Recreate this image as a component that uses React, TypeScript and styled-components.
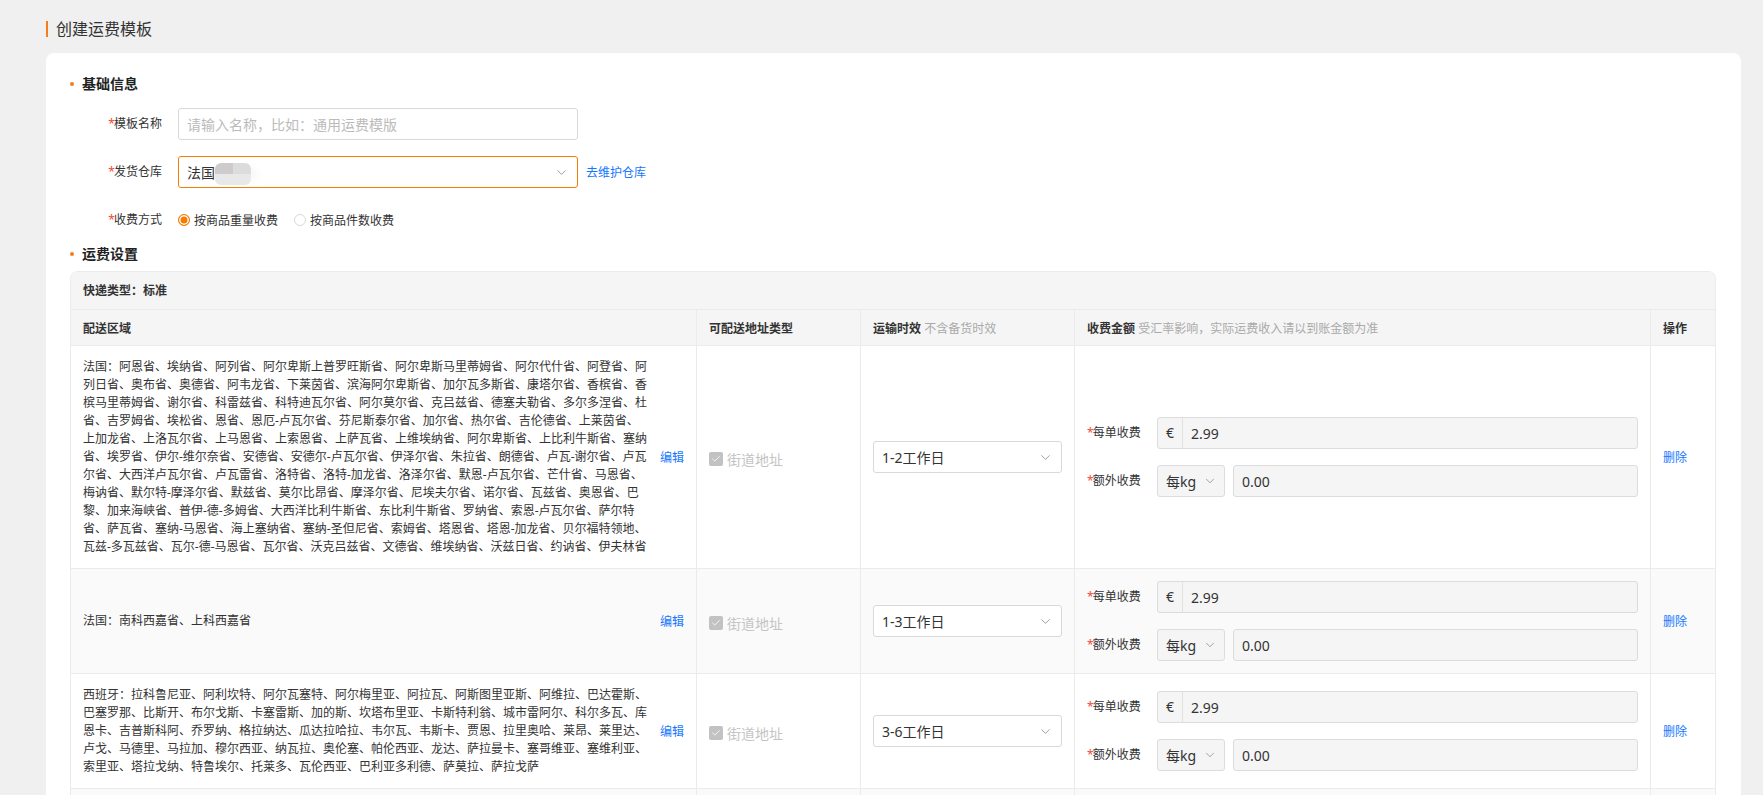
import React from 'react';
import styled, { createGlobalStyle } from 'styled-components';
import { ChevronDown, Check } from 'lucide-react';

const FONT = `"Noto Sans", "Noto Sans CJK SC", sans-serif`;

const franceLines = [
  '法国：阿恩省、埃纳省、阿列省、阿尔卑斯上普罗旺斯省、阿尔卑斯马里蒂姆省、阿尔代什省、阿登省、阿',
  '列日省、奥布省、奥德省、阿韦龙省、下莱茵省、滨海阿尔卑斯省、加尔瓦多斯省、康塔尔省、香槟省、香',
  '槟马里蒂姆省、谢尔省、科雷兹省、科特迪瓦尔省、阿尔莫尔省、克吕兹省、德塞夫勒省、多尔多涅省、杜',
  '省、吉罗姆省、埃松省、恩省、恩厄-卢瓦尔省、芬尼斯泰尔省、加尔省、热尔省、吉伦德省、上莱茵省、',
  '上加龙省、上洛瓦尔省、上马恩省、上索恩省、上萨瓦省、上维埃纳省、阿尔卑斯省、上比利牛斯省、塞纳',
  '省、埃罗省、伊尔-维尔奈省、安德省、安德尔-卢瓦尔省、伊泽尔省、朱拉省、朗德省、卢瓦-谢尔省、卢瓦',
  '尔省、大西洋卢瓦尔省、卢瓦雷省、洛特省、洛特-加龙省、洛泽尔省、默恩-卢瓦尔省、芒什省、马恩省、',
  '梅讷省、默尔特-摩泽尔省、默兹省、莫尔比昂省、摩泽尔省、尼埃夫尔省、诺尔省、瓦兹省、奥恩省、巴',
  '黎、加来海峡省、普伊-德-多姆省、大西洋比利牛斯省、东比利牛斯省、罗纳省、索恩-卢瓦尔省、萨尔特',
  '省、萨瓦省、塞纳-马恩省、海上塞纳省、塞纳-圣但尼省、索姆省、塔恩省、塔恩-加龙省、贝尔福特领地、',
  '瓦兹-多瓦兹省、瓦尔-德-马恩省、瓦尔省、沃克吕兹省、文德省、维埃纳省、沃兹日省、约讷省、伊夫林省',
];

const spainLines = [
  '西班牙：拉科鲁尼亚、阿利坎特、阿尔瓦塞特、阿尔梅里亚、阿拉瓦、阿斯图里亚斯、阿维拉、巴达霍斯、',
  '巴塞罗那、比斯开、布尔戈斯、卡塞雷斯、加的斯、坎塔布里亚、卡斯特利翁、城市雷阿尔、科尔多瓦、库',
  '恩卡、吉普斯科阿、乔罗纳、格拉纳达、瓜达拉哈拉、韦尔瓦、韦斯卡、贾恩、拉里奥哈、莱昂、莱里达、',
  '卢戈、马德里、马拉加、穆尔西亚、纳瓦拉、奥伦塞、帕伦西亚、龙达、萨拉曼卡、塞哥维亚、塞维利亚、',
  '索里亚、塔拉戈纳、特鲁埃尔、托莱多、瓦伦西亚、巴利亚多利德、萨莫拉、萨拉戈萨',
];

const rows = [
  { lines: franceLines, time: '1-2工作日' },
  { lines: ['法国：南科西嘉省、上科西嘉省'], time: '1-3工作日' },
  { lines: spainLines, time: '3-6工作日' },
];

function App() {
  return (
    <Page>
      <GlobalStyle />
      <PageTitle>创建运费模板</PageTitle>
      <Card>
        <SectionTitle>基础信息</SectionTitle>
        <FormRow>
          <FormLabel>
            <Star>*</Star>模板名称
          </FormLabel>
          <TextInput placeholder="请输入名称，比如：通用运费模版" />
        </FormRow>
        <FormRow>
          <FormLabel>
            <Star>*</Star>发货仓库
          </FormLabel>
          <SelectBox $width={400} $active>
            <span>
              法国
              <BlurPatch />
            </span>
            <Arrow size={15} strokeWidth={1} />
          </SelectBox>
          <LinkText>去维护仓库</LinkText>
        </FormRow>
        <FormRow>
          <FormLabel>
            <Star>*</Star>收费方式
          </FormLabel>
          <RadioGroup>
            <RadioItem>
              <Radio $checked />
              按商品重量收费
            </RadioItem>
            <RadioItem>
              <Radio />
              按商品件数收费
            </RadioItem>
          </RadioGroup>
        </FormRow>
        <SectionTitle $second>运费设置</SectionTitle>
        <TableBox>
          <TableCaption>快递类型：标准</TableCaption>
          <Table>
            <colgroup>
              <col style={{ width: 625 }} />
              <col style={{ width: 164 }} />
              <col style={{ width: 214 }} />
              <col style={{ width: 576 }} />
              <col />
            </colgroup>
            <thead>
              <tr>
                <Th>配送区域</Th>
                <Th>可配送地址类型</Th>
                <Th>
                  运输时效 <Hint>不含备货时效</Hint>
                </Th>
                <Th>
                  收费金额 <Hint>受汇率影响，实际运费收入请以到账金额为准</Hint>
                </Th>
                <Th>操作</Th>
              </tr>
            </thead>
            <tbody>
              {rows.map((row) => (
                <tr key={row.time}>
                  <Td>
                    <AreaCell>
                      <AreaText>
                        {row.lines.map((line) => (
                          <AreaLine key={line}>{line}</AreaLine>
                        ))}
                      </AreaText>
                      <LinkText>编辑</LinkText>
                    </AreaCell>
                  </Td>
                  <Td>
                    <CheckItem>
                      <CheckMark>
                        <Check size={10} strokeWidth={2} color="#fff" />
                      </CheckMark>
                      街道地址
                    </CheckItem>
                  </Td>
                  <Td>
                    <SelectBox $width={189}>
                      <span>{row.time}</span>
                      <Arrow size={15} strokeWidth={1} />
                    </SelectBox>
                  </Td>
                  <Td>
                    <FeeRow>
                      <FeeLabel>
                        <Star>*</Star>每单收费
                      </FeeLabel>
                      <FilledBox>
                        <Currency>€</Currency>
                        <FilledValue>2.99</FilledValue>
                      </FilledBox>
                    </FeeRow>
                    <FeeRow>
                      <FeeLabel>
                        <Star>*</Star>额外收费
                      </FeeLabel>
                      <UnitSelect>
                        每kg
                        <Arrow size={14} strokeWidth={1} />
                      </UnitSelect>
                      <FilledBox>
                        <FilledValue>0.00</FilledValue>
                      </FilledBox>
                    </FeeRow>
                  </Td>
                  <Td>
                    <LinkText>删除</LinkText>
                  </Td>
                </tr>
              ))}
              <tr>
                <EmptyTd />
                <EmptyTd />
                <EmptyTd />
                <EmptyTd />
                <EmptyTd />
              </tr>
            </tbody>
          </Table>
        </TableBox>
      </Card>
    </Page>
  );
}

export default App;

const GlobalStyle = createGlobalStyle`
  html, body {
    margin: 0;
    height: 795px;
    overflow: hidden;
    background: #f0f0f0;
  }
  * {
    box-sizing: border-box;
  }
`;
const Page = styled.div`
  height: 795px;
  overflow: hidden;
  padding: 21px 22px 0 46px;
  font-family: ${FONT};
  font-size: 12px;
  color: #333;
`;
const PageTitle = styled.h1`
  height: 16px;
  margin: 0 0 16px;
  padding-left: 8px;
  border-left: 2px solid #f57c1f;
  font-size: 16px;
  line-height: 16px;
  font-weight: 400;
  color: #333;
`;
const Card = styled.div`
  padding: 21px 25px 0 24px;
  border-radius: 8px;
  background: #fff;
  height: 800px;
`;
const SectionTitle = styled.h2<{ $second?: boolean }>`
  position: relative;
  height: 20px;
  margin: ${(p) => (p.$second ? '8px' : '0')} 0 ${(p) => (p.$second ? '7px' : '14px')};
  padding-left: 12px;
  font-size: 14px;
  line-height: 20px;
  font-weight: 700;
  color: #222;
  &::before {
    content: '';
    position: absolute;
    left: 0;
    top: 8px;
    width: 4px;
    height: 4px;
    border-radius: 50%;
    background: #f57c1f;
  }
`;
const FormRow = styled.div`
  display: flex;
  align-items: center;
  height: 32px;
  margin-bottom: 16px;
  &:nth-of-type(3) {
    margin-bottom: 0;
  }
`;
const FormLabel = styled.label`
  width: 108px;
  padding: 0 16px 1px 0;
  text-align: right;
  line-height: 16px;
  color: #333;
`;
const Star = styled.span`
  margin-right: -1px;
  color: #f5483b;
`;
const TextInput = styled.input`
  width: 400px;
  height: 32px;
  padding: 0 8px;
  border: 1px solid #d9d9d9;
  border-radius: 3px;
  outline: none;
  font-family: ${FONT};
  font-size: 14px;
  &::placeholder {
    color: #bbb;
  }
`;
const SelectBox = styled.div<{ $width: number; $active?: boolean }>`
  display: flex;
  align-items: center;
  justify-content: space-between;
  width: ${(p) => p.$width}px;
  height: 32px;
  padding: 0 8px;
  border: 1px solid ${(p) => (p.$active ? '#f57c00' : '#d9d9d9')};
  border-radius: 3px;
  background: #fff;
  font-size: 14px;
  color: #333;
  span {
    display: flex;
    align-items: center;
  }
`;
const Arrow = styled(ChevronDown)`
  flex: none;
  color: #666;
`;
const BlurPatch = styled.i`
  display: block;
  width: 36px;
  height: 22px;
  margin-top: 3px;
  border-radius: 6px;
  background:
    linear-gradient(#e8e8e8, #e8e8e8) 0 100% / 100% 50% no-repeat,
    linear-gradient(90deg, #cfcacd 0 50%, #dcdcdc 50% 100%) 0 0 / 100% 50% no-repeat;
  box-shadow: 12px 0 10px -6px #f4f5fa;
  filter: blur(0.6px);
`;
const LinkText = styled.a`
  flex: none;
  margin-left: 8px;
  color: #1677ff;
  font-size: 12px;
  td > & {
    margin-left: 0;
  }
`;
const RadioGroup = styled.div`
  display: flex;
  gap: 16px;
`;
const RadioItem = styled.label`
  display: flex;
  align-items: center;
  gap: 4px;
  color: #333;
`;
const Radio = styled.i<{ $checked?: boolean }>`
  display: block;
  width: 12px;
  height: 12px;
  border-radius: 50%;
  border: 1px solid ${(p) => (p.$checked ? '#f57c00' : '#d9d9d9')};
  background: ${(p) => (p.$checked ? '#f57c00' : '#fff')};
  box-shadow: ${(p) => (p.$checked ? 'inset 0 0 0 1.5px #fff' : 'none')};
`;
const TableBox = styled.div`
  width: 1646px;
  border: 1px solid #ebebeb;
  border-bottom: 0;
  border-radius: 8px 8px 0 0;
  overflow: hidden;
`;
const TableCaption = styled.div`
  height: 37px;
  padding-left: 12px;
  background: #f5f5f5;
  font-weight: 700;
  line-height: 37px;
  color: #333;
`;
const Table = styled.table`
  width: 100%;
  table-layout: fixed;
  border-collapse: separate;
  border-spacing: 0;
  tbody tr:nth-child(even) td {
    background: #fafafa;
  }
`;
const Th = styled.th`
  height: 37px;
  padding: 0 12px;
  border-top: 1px solid #ebebeb;
  border-bottom: 1px solid #ebebeb;
  border-left: 1px solid #ebebeb;
  background: #f5f5f5;
  text-align: left;
  font-size: 12px;
  font-weight: 700;
  color: #333;
  &:first-child {
    border-left: 0;
  }
`;
const Hint = styled.span`
  font-weight: 400;
  color: #aaa;
`;
const Td = styled.td`
  padding: 12px;
  border-bottom: 1px solid #ebebeb;
  border-left: 1px solid #ebebeb;
  vertical-align: middle;
  &:first-child {
    border-left: 0;
  }
`;
const EmptyTd = styled(Td)`
  height: 60px;
`;
const AreaCell = styled.div`
  display: flex;
  align-items: center;
  justify-content: space-between;
`;
const AreaText = styled.div`
  line-height: 18px;
  color: #333;
`;
const AreaLine = styled.div`
  white-space: nowrap;
`;
const CheckItem = styled.label`
  display: flex;
  align-items: center;
  gap: 4px;
  padding-top: 4px;
  font-size: 14px;
  color: #c4c4c4;
`;
const CheckMark = styled.i`
  display: flex;
  align-items: center;
  justify-content: center;
  width: 14px;
  height: 14px;
  border-radius: 2px;
  background: #c2c2c2;
`;
const FeeRow = styled.div`
  display: flex;
  align-items: center;
  gap: 8px;
  height: 32px;
  & + & {
    margin-top: 16px;
  }
`;
const FeeLabel = styled.label`
  flex: none;
  width: 62px;
  padding-bottom: 3px;
  color: #333;
`;
const FilledBox = styled.div`
  flex: 1;
  display: flex;
  align-items: center;
  height: 32px;
  border: 1px solid #dcdcdc;
  border-radius: 3px;
  background: #f5f5f5;
  font-size: 14px;
`;
const Currency = styled.span`
  width: 25px;
  height: 100%;
  border-right: 1px solid #e2e2e2;
  text-align: center;
  line-height: 30px;
`;
const FilledValue = styled.span`
  padding-left: 8px;
`;
const UnitSelect = styled.div`
  flex: none;
  display: flex;
  align-items: center;
  justify-content: space-between;
  width: 68px;
  height: 32px;
  padding: 0 7px 0 8px;
  border: 1px solid #dcdcdc;
  border-radius: 3px;
  background: #f5f5f5;
  font-size: 14px;
`;
